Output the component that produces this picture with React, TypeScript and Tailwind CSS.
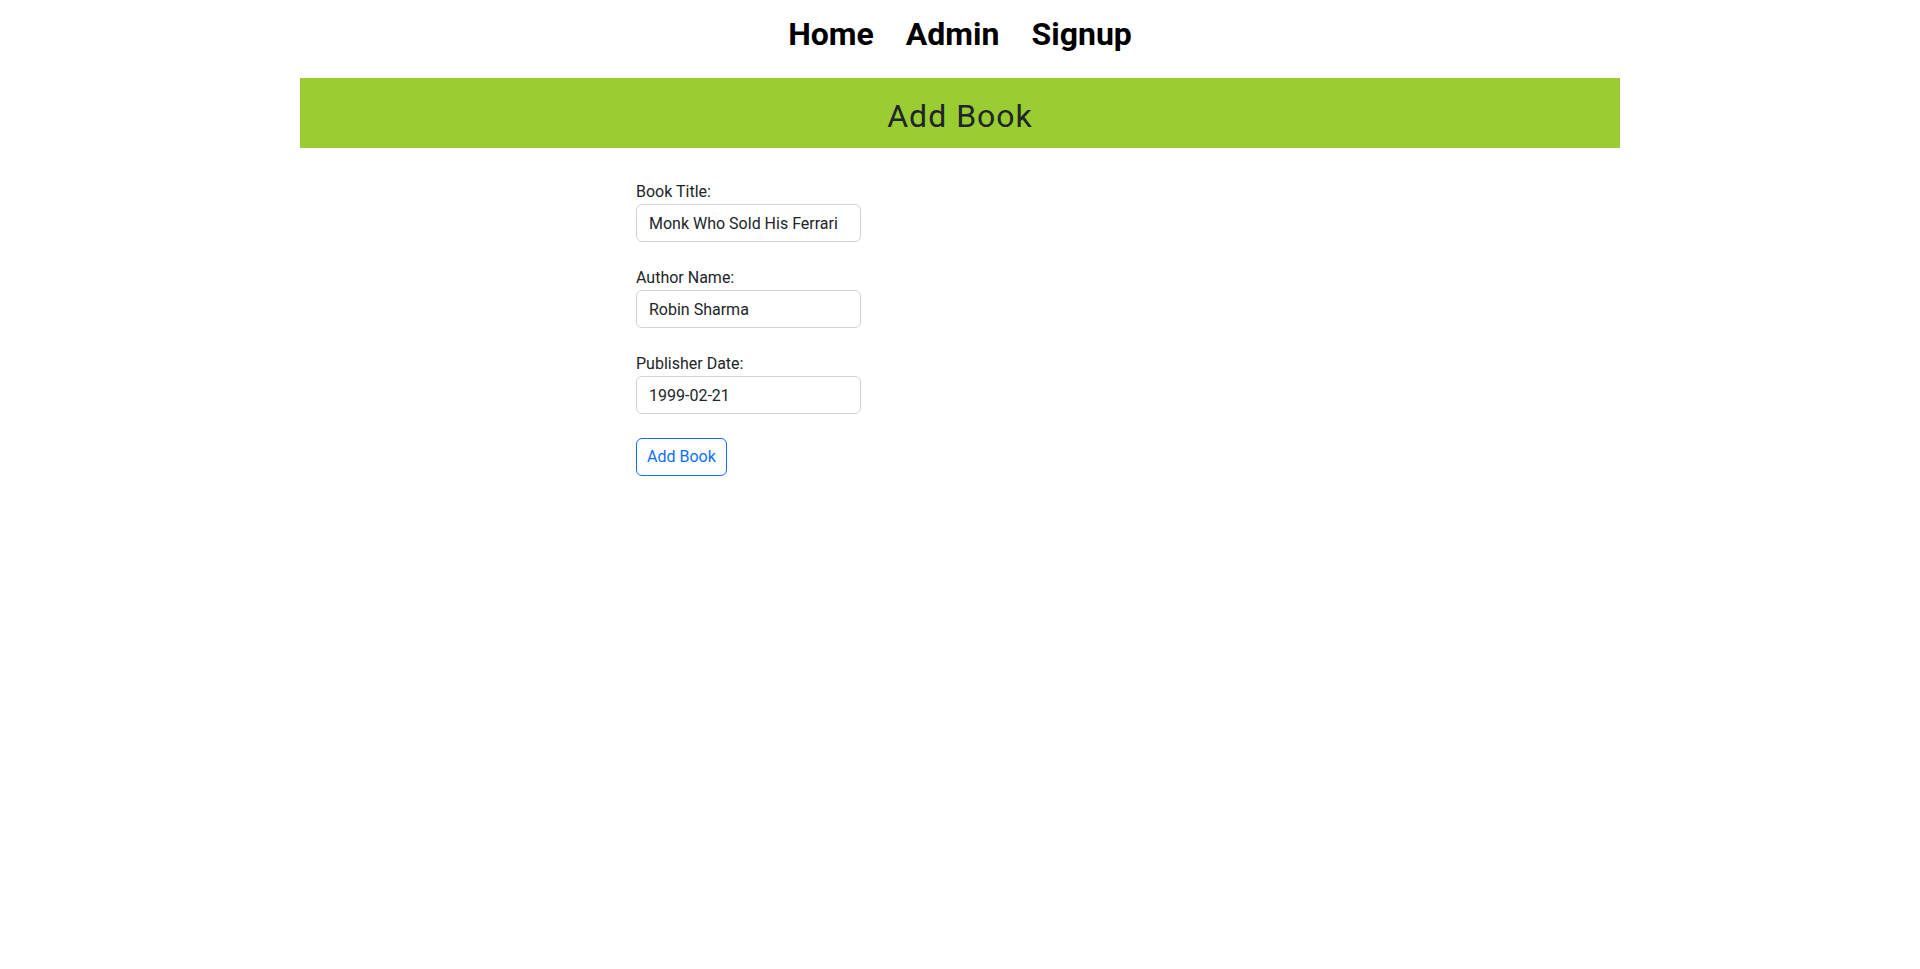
import React from 'react';

const fields = [
  { label: 'Book Title:', value: 'Monk Who Sold His Ferrari' },
  { label: 'Author Name:', value: 'Robin Sharma' },
  { label: 'Publisher Date:', value: '1999-02-21' },
];

export default function App() {
  return (
    <div className="min-h-screen bg-white font-['Roboto','Open_Sans',sans-serif] text-[#212529]">
      {/* Top nav */}
      <nav className="flex h-[78px] justify-center gap-8 pt-[15px]">
        {['Home', 'Admin', 'Signup'].map((item) => (
          <a key={item} href="#" className="text-[32px] font-bold leading-[38px] text-black">
            {item}
          </a>
        ))}
      </nav>

      <div className="mx-auto w-[1320px]">
        <div className="h-[70px] bg-[#9acd32] pt-[19px] text-center">
          <h1 className="text-[32px] leading-[38px] tracking-[1px]">Add Book</h1>
        </div>

        <form className="ml-[336px] mt-8 flex w-[225px] flex-col gap-6" onSubmit={(e) => e.preventDefault()}>
          {fields.map((f) => (
            <div key={f.label} className="flex flex-col">
              <label className="text-base leading-6">{f.label}</label>
              <input
                type="text"
                defaultValue={f.value}
                className="h-[38px] w-[225px] rounded-[6px] border border-[#ced4da] bg-white px-3 text-base text-[#212529] outline-none"
              />
            </div>
          ))}
          <div>
            <button
              type="submit"
              className="h-[38px] rounded-[6px] border border-[#0d6efd] bg-white px-[10px] text-base text-[#0d6efd]"
            >
              Add Book
            </button>
          </div>
        </form>
      </div>
    </div>
  );
}
